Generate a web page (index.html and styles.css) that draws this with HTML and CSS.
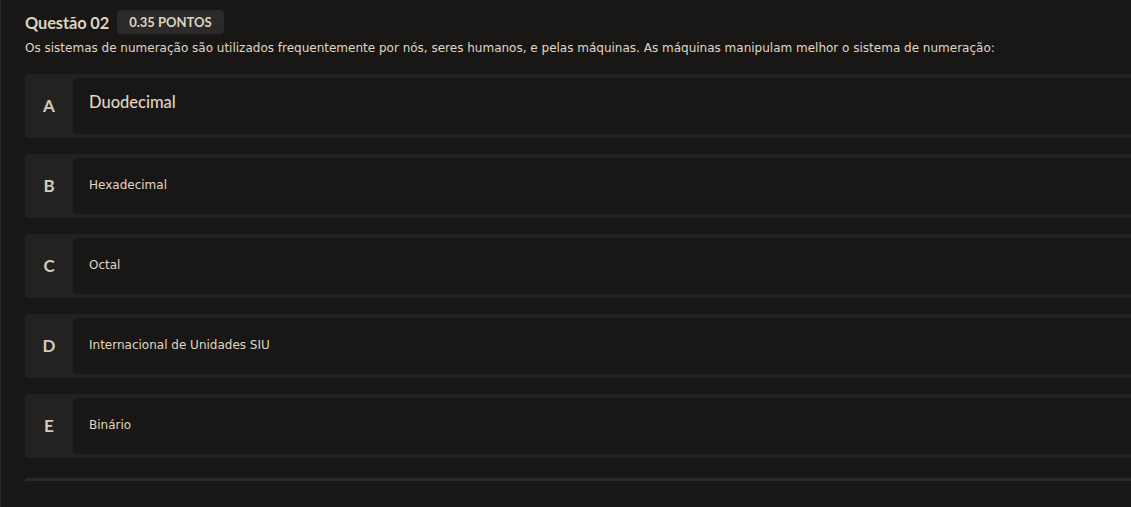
FILE: index.html
```html
<!DOCTYPE html>
<html lang="pt-BR">
<head>
<meta charset="utf-8">
<title>Questão 02</title>
<link rel="stylesheet" href="styles.css">
</head>
<body>
<div class="page">
  <div class="q-head">
    <h2 class="q-title">Questão 02</h2>
    <span class="q-badge">0.35 PONTOS</span>
  </div>
  <p class="q-text">Os sistemas de numeração são utilizados frequentemente por nós, seres humanos, e pelas máquinas. As máquinas manipulam melhor o sistema de numeração:</p>
  <div class="options">
    <div class="option"><div class="opt-letter">A</div><div class="opt-body"><span class="opt-lead">Duodecimal</span></div></div>
    <div class="option"><div class="opt-letter">B</div><div class="opt-body">Hexadecimal</div></div>
    <div class="option"><div class="opt-letter">C</div><div class="opt-body">Octal</div></div>
    <div class="option"><div class="opt-letter">D</div><div class="opt-body">Internacional de Unidades SIU</div></div>
    <div class="option"><div class="opt-letter">E</div><div class="opt-body">Binário</div></div>
  </div>
  <div class="divider"></div>
</div>
</body>
</html>
```
FILE: styles.css
```css
html, body {
  margin: 0;
  padding: 0;
  background: #181716;
  overflow: hidden;
}
body {
  border-left: 1px solid #2a2927;
  min-height: 507px;
  box-sizing: border-box;
}
.page {
  padding: 10px 0 0 24px;
  margin-right: -20px;
  color: #ddd3c0;
}
.q-head {
  display: flex;
  align-items: center;
  gap: 8px;
  height: 24px;
}
.q-title {
  margin: 0;
  font-family: Lato, "Open Sans", sans-serif;
  font-weight: 700;
  font-size: 16.4px;
  letter-spacing: -0.1px;
  color: #ddd3c0;
}
.q-badge {
  display: inline-flex;
  align-items: center;
  height: 24px;
  padding: 0 12px;
  border-radius: 4px;
  background: #2b2a28;
  font-family: Lato, sans-serif;
  font-weight: 700;
  font-size: 13px;
  color: #ddd3c0;
  box-sizing: border-box;
}
.q-text {
  margin: 7px 0 0;
  font-family: "DejaVu Sans", Verdana, sans-serif;
  font-size: 12px;
  line-height: 14px;
  color: #e0d6c3;
}
.options {
  margin-top: 19px;
  display: flex;
  flex-direction: column;
  gap: 16px;
}
.option {
  display: flex;
  height: 64px;
  padding: 4px 0;
  box-sizing: border-box;
  background: #232220;
  border-radius: 4px;
}
.opt-letter {
  width: 48px;
  display: flex;
  align-items: center;
  justify-content: center;
  padding-bottom: 2px;
  font-family: Lato, sans-serif;
  font-weight: 700;
  font-size: 17px;
  color: #d3ccbb;
}
.opt-body {
  flex: 1;
  display: flex;
  align-items: center;
  padding-left: 16px;
  padding-bottom: 2px;
  background: #181716;
  border-radius: 4px;
  font-family: "DejaVu Sans", Verdana, sans-serif;
  font-size: 12px;
  color: #e0d6c3;
}
.opt-lead {
  font-family: Lato, sans-serif;
  font-weight: 500;
  font-size: 16.5px;
  margin-top: -6px;
}
.divider {
  margin-top: 20px;
  height: 3px;
  background: #2a2927;
}
```
